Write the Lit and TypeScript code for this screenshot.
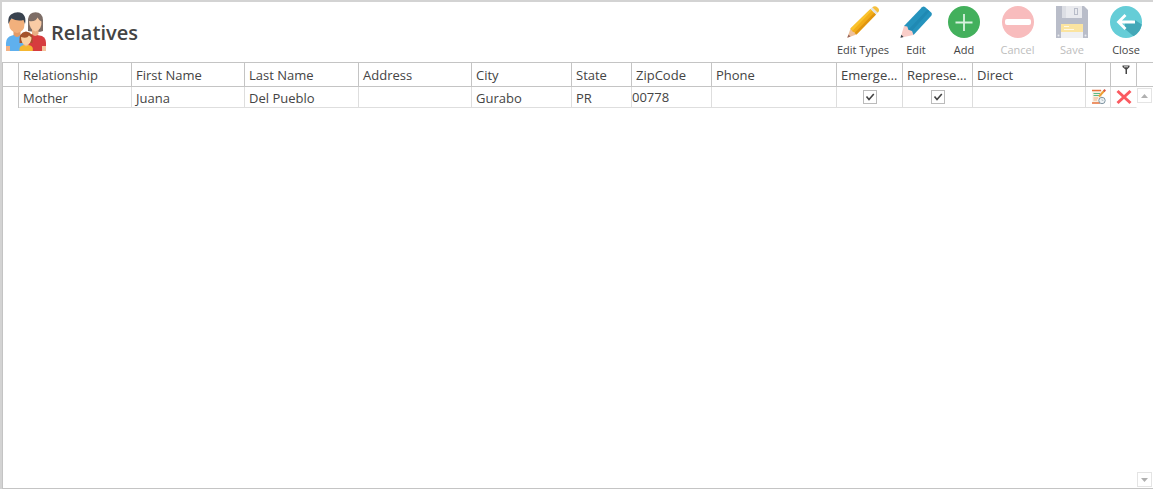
import { LitElement, html, css, svg, nothing } from "lit";
import { customElement, property, state } from "lit/decorators.js";
import { classMap } from "lit/directives/class-map.js";

const icons: Record<string, unknown> = {
  editTypes: svg`
    <path d="M.3 31.800 L3.500 22.500 L9.500 28.500 Z" fill="#eec19c"/>
    <path d="M.3 31.800 L1.500 28.500 L3.500 30.500 Z" fill="#96655c"/>
    <path d="M3.500 22.500 L23.500 3 L29 8.500 L9.500 28.500 L7.500 26.500 L5.500 25.500 Z" fill="#f2ad18"/>
    <path d="M3.500 22.500 L23.500 3 L25 4.500 L5.500 24.700 Z" fill="#fac32c"/>
    <path d="M7.500 27 L27.300 6.800 L29 8.500 L9.500 28.500 Z" fill="#e0950f"/>
    <path d="M23.500 3 L25.200 1.300 L30.700 6.800 L29 8.500 Z" fill="#dfe2e5"/>
    <path d="M25.200 1.300 Q28 -1 30.500 1.500 Q33.500 4 30.700 6.800 Z" fill="#f5bf3c"/>`,
  edit: svg`
    <path d="M4 20 L22 1.200 Q23.500 0 25 1 L31.200 6.500 Q32.500 8 31.300 9.700 L13.500 29 L8 26 Z" fill="#2593bd"/>
    <path d="M8.500 23.500 L27.500 3.400 L29.500 5.200 L11 26 Z" fill="#2089b3"/>
    <path d="M4 20 L7.300 20.500 L8.300 23.800 L12 25 L13.500 29 L.5 31.800 Z" fill="#f9cdc8"/>
    <path d="M1.300 28.800 L3.600 31.100 L.5 31.800 Z" fill="#35454e"/>`,
  add: svg`
    <circle cx="16" cy="16" r="16" fill="#43b05c"/>
    <path d="M16 8 V25 M7.500 16.500 H24.500" stroke="#d8f2de" stroke-width="1.800" fill="none"/>`,
  cancel: svg`
    <circle cx="16" cy="16" r="16" fill="#f8bcbd"/>
    <rect x="3" y="13" width="26" height="6" rx="2" fill="#fff"/>`,
  save: svg`
    <path d="M0 0 H28 L32 4 V32 H0 Z" fill="#b9bdc9"/>
    <rect x="6" width="20" height="12" fill="#e9eaee"/>
    <rect x="6" width="4" height="12" fill="#dcdee4"/>
    <rect x="18.500" y="2.500" width="3" height="6" fill="#e9eaee" stroke="#b9bdc9"/>
    <rect x="5" y="18" width="22" height="14" fill="#eff0f2"/>
    <rect x="5" y="18" width="22" height="8" fill="#fbe4a0"/>
    <path d="M8 20.500 H13 M8 23.500 H18" stroke="#fff8e3"/>
    <circle cx="2.500" cy="29.500" r="1" fill="#e9eaee"/>
    <circle cx="29.500" cy="29.500" r="1" fill="#e9eaee"/>`,
  close: svg`
    <circle cx="16" cy="16" r="16" fill="#65cdd7"/>
    <path d="M15 23 L23.500 30.200 A16 16 0 0 0 31.800 18.500 L25 14 L15 17 Z" fill="#43a8b8"/>
    <path d="M25 16 H8.500 M15.500 9 L8.500 16 L15.500 23" fill="none" stroke="#fff" stroke-width="2.800"/>`,
};

const familyIcon = html`<svg class="family" viewBox="0 0 40 40" aria-hidden="true">
  <path d="M0 39 V31 Q0 25 6 23.500 L11 22 L17 24 L20 27 V39 Z" fill="#5fb0ee"/>
  <path d="M0 39 V34 H4 V39 Z" fill="#f2b184"/>
  <path d="M7.500 17 H14.500 V23 Q11 27 7.500 23 Z" fill="#e39a66"/>
  <path d="M3 7 H18.500 V12 Q18.500 20 11 21 Q3.500 20 3 12 Z" fill="#f2b07c"/>
  <path d="M2.500 12 Q1.500 5 5 2.500 Q11 -1.500 16.500 1.500 Q20.500 5 19 12 L17.500 8 Q11 9.500 5.500 6.500 L4 8.500 Z" fill="#39424e"/>
  <path d="M22 19 V7 Q23 .5 29.500 .3 Q36.500 .5 37 8 V19 Q33 21 22 19 Z" fill="#7d6d66"/>
  <path d="M20 39 V25 L26 22 L31 23 L36 24 Q40 26 40 31 V39 Z" fill="#d63c3e"/>
  <path d="M36 34 H40 V39 H36 Z" fill="#f6c39b"/>
  <path d="M26 16 H32.500 V22 Q29 26 26 22 Z" fill="#eaae84"/>
  <path d="M23 9 Q30 10 31.500 5.500 Q33 8.500 35.500 9.500 Q36 17.500 29.500 19.500 Q23.500 18 23 9 Z" fill="#f9cba5"/>
  <path d="M13.500 31 Q12.500 20 20 19.500 Q28 20 26.500 31 L24 31 H15 Z" fill="#a5522b"/>
  <path d="M17.500 30 H22.500 V36 H17.500 Z" fill="#f0bb8a"/>
  <path d="M15 25 Q21 27 23 23.500 L25.500 25.500 Q25.500 32 20 33 Q15 32 15 25 Z" fill="#fad0a3"/>
  <path d="M13.500 39 V36.500 Q14 33.500 18 33 L20 34.500 L22.500 33 Q26.500 33.500 26.800 36.500 V39 Z" fill="#f5b731"/>
</svg>`;

const noteIcon = html`<svg class="cell-icon" viewBox="0 0 16 16" aria-hidden="true">
  <path d="M2.500 1 H12 V14.500 H2.500 Z" fill="#f7efe2"/>
  <path d="M2 1.500 H11" stroke="#e8733c" stroke-width="1.500"/>
  <path d="M3.500 4.500 H10 M3.500 6.500 H9" stroke="#5cba83"/>
  <path d="M3.500 9 H8 M3.500 11 H7" stroke="#f4b184"/>
  <path d="M2 14 H10" stroke="#e8733c" stroke-width="1.500"/>
  <path d="M9 7.500 L14.500 1.500" stroke="#ef9f35" stroke-width="2"/>
  <path d="M13.800 2.200 L15.300 .8" stroke="#d9534a" stroke-width="2"/>
  <circle cx="12" cy="11.500" r="3.200" fill="#eef3f6" stroke="#8196a3"/>
  <path d="M12 9.500 V11.500 H13.500" fill="none" stroke="#b4c0c8" stroke-width=".8"/>
</svg>`;

const deleteIcon = html`<svg class="cell-icon" viewBox="0 0 16 16" aria-hidden="true">
  <path d="M1.500 2 L14.500 14 M14.500 2 L1.500 14" stroke="#fb5a60" stroke-width="3" fill="none"/>
</svg>`;

const filterIcon = html`<svg class="filter-icon" viewBox="0 0 8 9" aria-hidden="true">
  <path d="M.5 .5 H7.500 V2 L5 4.500 V9 H3.500 V4.500 L.5 2 Z" fill="#444"/>
  <path d="M2 1.800 H6" stroke="#fff" stroke-width=".8"/>
</svg>`;

interface Action {
  id: string;
  label: string;
  disabled?: boolean;
}

interface Relative {
  relationship: string;
  firstName: string;
  lastName: string;
  address: string;
  city: string;
  state: string;
  zip: string;
  phone: string;
  emergency: boolean;
  representative: boolean;
  direct: string;
}

@customElement("tool-button")
class ToolButton extends LitElement {
  @property({ type: Object }) action!: Action;

  static styles = css`
    :host {
      display: block;
    }
    .button {
      display: flex;
      flex-direction: column;
      align-items: center;
      gap: 4px;
      width: 100%;
      padding: 4px 0 0;
      border: 0;
      background: none;
      color: #444;
      font: 11px/16px "Open Sans", "Noto Sans", sans-serif;
      white-space: nowrap;
    }
    .button:disabled {
      color: #bdbdbd;
    }
    .icon {
      width: 32px;
      height: 32px;
    }
  `;

  render() {
    return html`<button class="button" type="button" ?disabled=${this.action.disabled}>
      <svg class="icon" viewBox="0 0 32 32" aria-hidden="true">${icons[this.action.id]}</svg>
      <span>${this.action.label}</span>
    </button>`;
  }
}

@customElement("app-root")
class AppRoot extends LitElement {
  @state() private actions: Action[] = [
    { id: "editTypes", label: "Edit Types" },
    { id: "edit", label: "Edit" },
    { id: "add", label: "Add" },
    { id: "cancel", label: "Cancel", disabled: true },
    { id: "save", label: "Save", disabled: true },
    { id: "close", label: "Close" },
  ];

  private columns: [string, number][] = [
    ["Relationship", 113],
    ["First Name", 113],
    ["Last Name", 114],
    ["Address", 113],
    ["City", 100],
    ["State", 60],
    ["ZipCode", 80],
    ["Phone", 125],
    ["Emergency", 66],
    ["Representative", 70],
    ["Direct", 0],
  ];

  @state() private rows: Relative[] = [
    {
      relationship: "Mother",
      firstName: "Juana",
      lastName: "Del Pueblo",
      address: "",
      city: "Gurabo",
      state: "PR",
      zip: "00778",
      phone: "",
      emergency: true,
      representative: true,
      direct: "",
    },
  ];

  static styles = css`
    :host {
      display: flex;
      flex-direction: column;
      box-sizing: border-box;
      min-height: 100vh;
      border-top: 2px solid #d3d3d3;
      border-left: 2px solid #d3d3d3;
      background: #fff;
      color: #444;
      font: 13px/18px "Open Sans", "Noto Sans", sans-serif;
    }
    .header {
      display: flex;
      justify-content: space-between;
      height: 60px;
    }
    .brand {
      display: flex;
      align-items: center;
      gap: 5px;
      padding-left: 4px;
    }
    .family {
      width: 40px;
      height: 40px;
    }
    .title {
      margin: 0;
      padding-top: 2px;
      font-size: 20px;
      line-height: 28px;
      font-weight: 600;
    }
    .toolbar {
      display: grid;
      grid-template-columns: 62px 44px 52px 55px 54px 54px;
    }
    .grid {
      display: flex;
      flex: 1;
      border: solid #c4c4c4;
      border-width: 1px 0 1px 1px;
    }
    .content {
      flex: 1;
      min-width: 0;
    }
    .table {
      width: 100%;
      table-layout: fixed;
      border-collapse: separate;
      border-spacing: 0;
    }
    .table th,
    .table td {
      box-sizing: border-box;
      padding: 0 0 0 4px;
      overflow: hidden;
      text-align: left;
      text-overflow: ellipsis;
      white-space: nowrap;
      font-weight: 400;
    }
    .table th {
      height: 24px;
      border-right: 1px solid #c4c4c4;
      border-bottom: 1px solid #c4c4c4;
    }
    .table td {
      height: 21px;
      padding-top: 2px;
      border-right: 1px solid #dedede;
      border-bottom: 1px solid #dedede;
    }
    .table .marker {
      border-bottom: 0;
      border-right-color: #c4c4c4;
    }
    .table td.flush {
      padding: 0;
    }
    .table td.center,
    .table th.center {
      padding: 0;
      text-align: center;
    }
    .table th.top {
      padding-top: 2px;
      vertical-align: top;
      line-height: 0;
    }
    .table td:last-child {
      border-right-color: transparent;
    }
    .marker-col {
      width: 16px;
    }
    .action-col {
      width: 25px;
    }
    .filter-col {
      width: 26px;
    }
    .filter-icon {
      width: 8px;
      height: 9px;
      margin-left: 4px;
    }
    .check {
      display: grid;
      justify-content: center;
      align-content: center;
    }
    .box,
    .tick {
      grid-area: 1 / 1;
      box-sizing: border-box;
      width: 14px;
      height: 14px;
      margin: 0;
    }
    .box {
      appearance: none;
      border: 1px solid #bbb;
      background: #fff;
    }
    .tick {
      visibility: hidden;
      pointer-events: none;
    }
    .box:checked + .tick {
      visibility: visible;
    }
    .row-button {
      display: grid;
      width: 100%;
      padding: 0;
      border: 0;
      background: none;
      place-items: center;
    }
    .cell-icon {
      width: 16px;
      height: 16px;
    }
    .side {
      display: flex;
      flex-direction: column;
      width: 16px;
    }
    .side-head {
      height: 23px;
      border-bottom: 1px solid #c4c4c4;
    }
    .track {
      display: flex;
      flex: 1;
      flex-direction: column;
      justify-content: space-between;
      padding: 1px 1px 1px 0;
    }
    .arrow {
      display: grid;
      width: 15px;
      height: 15px;
      padding: 0;
      border: 1px solid #e4e4e4;
      background: #fff;
      place-items: center;
    }
    .arrow-icon {
      width: 7px;
      height: 4px;
    }
    .down .arrow-icon {
      transform: rotate(180deg);
    }
  `;

  private arrow(down: boolean) {
    return html`<button
      class=${classMap({ arrow: true, down })}
      type="button"
      aria-label=${down ? "Scroll down" : "Scroll up"}
    >
      <svg class="arrow-icon" viewBox="0 0 7 4" aria-hidden="true">
        <path d="M0 4 L3.500 0 L7 4 Z" fill="#b0b0b0" />
      </svg>
    </button>`;
  }

  private check(label: string, checked: boolean) {
    return html`<td class="center">
      <label class="check">
        <input class="box" type="checkbox" aria-label=${label} .checked=${checked} />
        <svg class="tick" viewBox="0 0 14 14" aria-hidden="true">
          <path d="M3.500 6.500 L6 9.500 L10.800 4" fill="none" stroke="#444" stroke-width="1.600" />
        </svg>
      </label>
    </td>`;
  }

  render() {
    return html`
      <header class="header">
        <div class="brand">
          ${familyIcon}
          <h1 class="title">Relatives</h1>
        </div>
        <nav class="toolbar">
          ${this.actions.map((a) => html`<tool-button .action=${a}></tool-button>`)}
        </nav>
      </header>
      <main class="grid">
        <div class="content">
          <table class="table">
            <colgroup>
              <col class="marker-col" />
              ${this.columns.map(([, w]) => html`<col style=${w ? `width:${w}px` : nothing} />`)}
              <col class="action-col" />
              <col class="filter-col" />
            </colgroup>
            <thead>
              <tr>
                <th></th>
                ${this.columns.map(([name]) => html`<th scope="col">${name}</th>`)}
                <th></th>
                <th class="center top">${filterIcon}</th>
              </tr>
            </thead>
            <tbody>
              ${this.rows.map(
                (r) => html`<tr>
                  <td class="marker"></td>
                  <td>${r.relationship}</td>
                  <td>${r.firstName}</td>
                  <td>${r.lastName}</td>
                  <td>${r.address}</td>
                  <td>${r.city}</td>
                  <td>${r.state}</td>
                  <td class="flush">${r.zip}</td>
                  <td>${r.phone}</td>
                  ${this.check("Emergency", r.emergency)}
                  ${this.check("Representative", r.representative)}
                  <td>${r.direct}</td>
                  <td class="center">
                    <button class="row-button" type="button" aria-label="Edit row">${noteIcon}</button>
                  </td>
                  <td class="center">
                    <button class="row-button" type="button" aria-label="Delete row">${deleteIcon}</button>
                  </td>
                </tr>`
              )}
            </tbody>
          </table>
        </div>
        <div class="side">
          <div class="side-head"></div>
          <div class="track">${this.arrow(false)} ${this.arrow(true)}</div>
        </div>
      </main>
    `;
  }
}
